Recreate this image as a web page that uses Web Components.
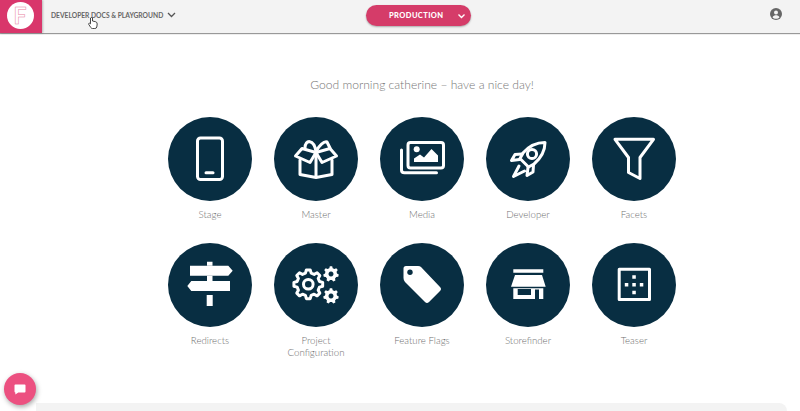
<!DOCTYPE html>
<html lang="en">
<head>
<meta charset="utf-8">
<title>Dashboard</title>
<style>
  html, body { margin: 0; height: 100%; overflow: hidden; background: #fff; }
  body { font-family: Lato, "Open Sans", sans-serif; }
</style>
</head>
<body>
<app-shell>
  <app-header slot="header" project="Developer Docs &amp; Playground" env="Production"></app-header>
  <home-grid greeting="Good morning catherine – have a nice day!">
    <home-tile icon="stage">Stage</home-tile>
    <home-tile icon="master">Master</home-tile>
    <home-tile icon="media">Media</home-tile>
    <home-tile icon="developer">Developer</home-tile>
    <home-tile icon="facets">Facets</home-tile>
    <home-tile icon="redirects">Redirects</home-tile>
    <home-tile icon="config">Project Configuration</home-tile>
    <home-tile icon="flags">Feature Flags</home-tile>
    <home-tile icon="store">Storefinder</home-tile>
    <home-tile icon="teaser">Teaser</home-tile>
  </home-grid>
  <chat-button slot="overlay"></chat-button>
</app-shell>

<script>
// builds a toothed outline, used by the config icon
function gear(cx, cy, outer, inner, teeth) {
  const step = Math.PI * 2 / teeth;
  let d = '';
  for (let i = 0; i < teeth; i++) {
    const a = i * step - Math.PI / 2;
    const pts = [
      [inner, a - step * 0.32], [outer, a - step * 0.17],
      [outer, a + step * 0.17], [inner, a + step * 0.32]
    ];
    pts.forEach(([r, t], j) => {
      d += (i === 0 && j === 0 ? 'M' : 'L') + (cx + r * Math.cos(t)).toFixed(2) + ' ' + (cy + r * Math.sin(t)).toFixed(2);
    });
  }
  return d + 'Z';
}

const ICONS = {
  stage: `<rect x="29.500" y="21" width="25" height="41.500" rx="3" class="s"/><path d="M38 55.800h7" class="s" stroke-width="2"/>`,
  master: `<path d="M26 43v14.500l16 3 16-3V43M42 36v24.500" class="s"/>
    <path d="M42 35.500 28 31.500l-6.500 7.500 14.500 6.500zM42 35.500l14-4 6.500 7.500-14.500 6.500z" class="s"/>
    <path d="M31 31c0-9 9-9 11 3.500 3-6 8-10.500 11-9.500l3 6" class="s"/>`,
  media: `<rect x="28" y="25.500" width="35.500" height="25.500" rx="2.500" class="s"/>
    <path d="M21.500 33v20q0 2.800 3 2.800h32" class="s"/>
    <circle cx="36.700" cy="32.300" r="3" fill="#fff"/>
    <path d="M34 45v-3.500l6-4 4 3 7.500-8.500 6.500 6.500V45z" fill="#fff"/>`,
  developer: `<path d="M59 25.500C50 25.500 43 29 37 36l-3 5.500 8.500 8.500 5.500-3C55 41 59 34 59 25.500z" class="s" stroke-width="2.600"/>
    <path d="M36 37l-7 .5-3.500 6 8-1M47.500 48l-.5 7-6 3.500 1-8M33 49l-5.500 10.500L38.500 54" class="s" stroke-width="2.600"/>
    <circle cx="46" cy="37" r="4.600" class="s" stroke-width="2.600"/>`,
  facets: `<path d="M23 22.300h38.500L48 40.500V61.500L36.500 55.500V40.500z" class="s" stroke-width="3.400"/>`,
  redirects: `<path d="M22 22.700h38.300l4.400 5-4.400 5H22zM62 38H23.300l-4 5 4 5H62z" fill="#fff"/>
    <path d="M39 18.700h5.500v4H39zM39 32.700h5.500V38H39zM38.700 52h6v11h-6z" fill="#fff"/>`,
  config: `<path d="${gear(34.3, 41.3, 14.500, 11.500, 8)}" class="s" stroke-width="2.800"/>
    <circle cx="34.300" cy="41.300" r="4.800" class="s" stroke-width="2.800"/>
    <path d="${gear(57, 31, 7.800, 6, 7)}M57 28.500a2.500 2.500 0 1 0 .01 0z" fill="#fff" fill-rule="evenodd"/>
    <path d="${gear(57, 53, 7.800, 6, 7)}M57 50.500a2.500 2.500 0 1 0 .01 0z" fill="#fff" fill-rule="evenodd"/>`,
  flags: `<path d="M26 23h12q2 0 3 1l19 20q2 2 0 4L49 59q-2 2-4 0L25 39q-1.500-1.500-1.500-4v-9.500q0-2.500 2.500-2.500z" fill="#fff"/>
    <circle cx="30" cy="29.300" r="2.700" fill="#082e42"/>`,
  store: `<path d="M27.300 26.300h30v3.400h-30zM29 32h27l3.700 11.700H25zM27.300 45.300h30V56h-4.300V46.500h-4V56H27.300z" fill="#fff" fill-rule="evenodd"/>
    <rect x="31.700" y="46" width="13.300" height="6" fill="#082e42"/>`,
  teaser: `<rect x="27.200" y="26.200" width="30.300" height="30.300" class="s" stroke-width="3" stroke-linejoin="miter"/>
    <path d="M40.300 32.200h3.500v3.500h-3.500zM40.300 40h3.500v3.500h-3.500zM40.300 47.800h3.500v3.500h-3.500zM32.800 40h3.500v3.500h-3.500zM47.800 40h3.500v3.500h-3.500z" fill="#fff"/>`
};

class AppShell extends HTMLElement {
  constructor() {
    super();
    this.attachShadow({ mode: 'open' }).innerHTML = `
      <style>
        :host { display: grid; grid-template-rows: 33px 370px 8px; height: 411px; overflow: hidden; }
        main { padding-left: 44px; }
        .strip { margin: 0 13px 0 36px; background: #f3f3f3; border-top-right-radius: 8px; }
      </style>
      <slot name="header"></slot>
      <main><slot></slot></main>
      <div class="strip"></div>
      <slot name="overlay"></slot>`;
  }
}

class AppHeader extends HTMLElement {
  constructor() {
    super();
    this.attachShadow({ mode: 'open' }).innerHTML = `
      <style>
        :host { display: flex; align-items: stretch; position: relative; height: 33px; background: #f3f3f3; box-shadow: 0 1px 1px rgba(0,0,0,.4); z-index: 2; font-family: Lato, sans-serif; }
        .logo { width: 42px; background: #d9366b; display: flex; align-items: center; justify-content: center; flex: none; box-shadow: 1px 0 2px rgba(0,0,0,.25); padding-right: 2px; box-sizing: border-box; }
        .disc { width: 27px; height: 27px; border-radius: 50%; background: #fff; display: flex; align-items: center; justify-content: center; margin-bottom: 3px; font-size: 23px; font-weight: 700; line-height: 1; color: #fff; -webkit-text-stroke: .5px #e87fa0; }
        .project { display: flex; align-items: center; gap: 4px; margin: 0 0 3px 9px; width: 315px; flex: none; font-size: 6.700px; font-weight: 700; color: #666; text-transform: uppercase; white-space: nowrap; }
        .env { display: flex; align-items: center; justify-content: space-between; box-sizing: border-box; width: 105px; height: 21px; margin-top: 5px; padding: 0 5px 0 23px; border-radius: 11px; background: #d53c69; box-shadow: 0 1px 2px rgba(0,0,0,.3); color: #fff; font-size: 7.500px; font-weight: 900; letter-spacing: .4px; text-transform: uppercase; }
        .user { margin: 8px 18px 0 auto; width: 12px; height: 12px; }
        svg { display: block; }
        .hand { position: absolute; left: 88px; top: 17px; }
      </style>
      <div class="logo"><div class="disc">F</div></div>
      <div class="project"><span>${this.getAttribute('project')}</span>
        <svg width="9" height="6" viewBox="0 0 9 6"><path d="M1 1l3.500 3.500L8 1" fill="none" stroke="#555" stroke-width="1.300"/></svg>
      </div>
      <div class="env"><span>${this.getAttribute('env')}</span>
        <svg width="9" height="6" viewBox="0 0 9 6"><path d="M1.500 1.500l3 3 3-3" fill="none" stroke="#fff" stroke-width="1.400"/></svg>
      </div>
      <svg class="user" viewBox="0 0 12 12"><circle cx="6" cy="6" r="6" fill="#666"/><circle cx="6" cy="4.500" r="2" fill="#f3f3f3"/><path d="M2.500 9.200c.8-1.500 2.200-2 3.500-2s2.700.5 3.500 2C8.700 10.200 7.400 10.800 6 10.800s-2.700-.6-3.500-1.600z" fill="#f3f3f3"/></svg>
      <svg class="hand" width="10" height="12" viewBox="0 0 10 12"><path d="M2.500 1q1-1 2 0v3l3 .7q1.800.5 1.700 2.300L8.800 10q-.3 1.500-2 1.500H4.500q-1 0-1.700-1L.8 7.500q-.6-1.200.7-1.300l1 .6z" fill="#fff" stroke="#333" stroke-width=".9"/></svg>`;
  }
}

class HomeGrid extends HTMLElement {
  constructor() {
    super();
    this.attachShadow({ mode: 'open' }).innerHTML = `
      <style>
        :host { display: block; font-family: Lato, sans-serif; }
        h1 { margin: 0; padding-top: 43px; height: 41px; box-sizing: content-box; text-align: center; font-size: 12.100px; font-weight: 300; line-height: 18px; color: #777; }
        .tiles { display: grid; grid-template-columns: repeat(5, 84px); grid-auto-rows: 126px; column-gap: 22px; justify-content: center; }
      </style>
      <h1>${this.getAttribute('greeting')}</h1>
      <div class="tiles"><slot></slot></div>`;
  }
}

class HomeTile extends HTMLElement {
  constructor() {
    super();
    this.attachShadow({ mode: 'open' }).innerHTML = `
      <style>
        :host { display: flex; flex-direction: column; align-items: center; font-family: Lato, sans-serif; }
        .disc { width: 84px; height: 84px; border-radius: 50%; background: #082e42; flex: none; }
        svg { display: block; }
        .s { fill: none; stroke: #fff; stroke-width: 3; stroke-linejoin: round; stroke-linecap: round; }
        .name { margin-top: 8px; width: 84px; text-align: center; font-size: 9.700px; font-weight: 300; line-height: 11.500px; color: #707070; }
      </style>
      <div class="disc"><svg width="84" height="84" viewBox="0 0 84 84">${ICONS[this.getAttribute('icon')]}</svg></div>
      <div class="name"><slot></slot></div>`;
  }
}

class ChatButton extends HTMLElement {
  constructor() {
    super();
    this.attachShadow({ mode: 'open' }).innerHTML = `
      <style>
        :host { position: absolute; left: 4px; top: 373px; width: 32px; height: 32px; border-radius: 50%; background: #ec5080; box-shadow: 1px 2px 5px rgba(0,0,0,.35); display: flex; align-items: center; justify-content: center; z-index: 3; }
      </style>
      <svg width="12" height="11" viewBox="0 0 14 13"><path d="M1.500 .5h11q1 0 1 1v7.500q0 1-1 1H5l-3.500 2.500v-2.500q-1 0-1-1V1.500q0-1 1-1z" fill="#fff"/></svg>`;
  }
}

customElements.define('app-shell', AppShell);
customElements.define('app-header', AppHeader);
customElements.define('home-grid', HomeGrid);
customElements.define('home-tile', HomeTile);
customElements.define('chat-button', ChatButton);
</script>
</body>
</html>
